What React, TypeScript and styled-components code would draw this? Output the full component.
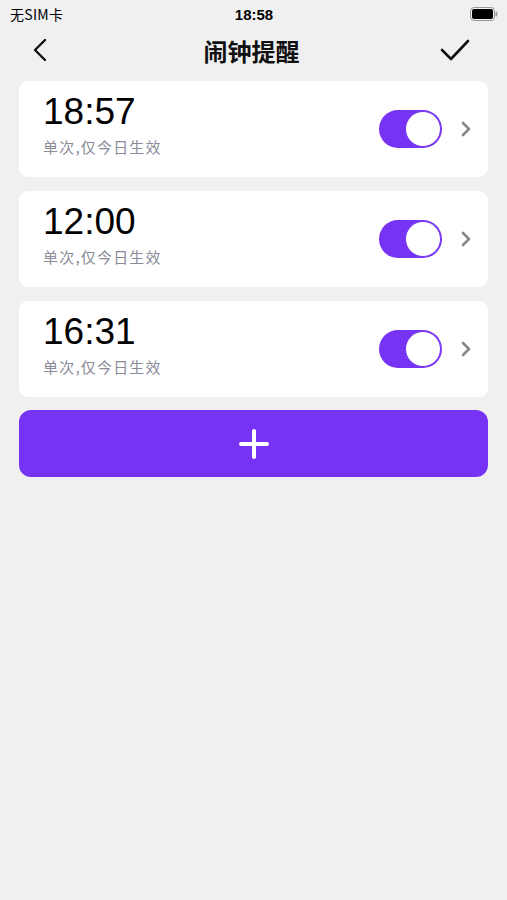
import React from "react";
import styled, { createGlobalStyle } from "styled-components";

const GlobalStyle = createGlobalStyle`
  html, body {
    margin: 0;
    padding: 0;
    background: #f0f0f0;
    font-family: "Liberation Sans", "Noto Sans CJK SC", sans-serif;
  }
`;

const Page = styled.div`
  width: 507px;
  min-height: 900px;
  background: #f0f0f0;
`;

const StatusBar = styled.div`
  height: 28px;
  display: grid;
  grid-template-columns: 1fr auto 1fr;
  align-items: center;
  padding: 0 9px 0 10px;
  color: #000;
`;

const Carrier = styled.span`
  font-size: 14px;
  font-family: "Noto Sans CJK SC", sans-serif;
  letter-spacing: 0.3px;
`;

const Clock = styled.span`
  font-weight: bold;
  font-size: 15px;
`;

const Battery = styled.div`
  justify-self: end;
  display: flex;
  align-items: center;
`;

const NavBar = styled.div`
  height: 48px;
  display: grid;
  grid-template-columns: 60px 1fr 60px;
  align-items: center;
  padding: 0 37px 0 33px;
  margin-top: -2px;
`;

const Title = styled.h1`
  margin: 0;
  text-align: center;
  font-size: 24px;
  font-weight: bold;
  font-family: "Noto Sans CJK SC", sans-serif;
  color: #111;
`;

const IconButton = styled.button<{ $end?: boolean }>`
  border: 0;
  background: none;
  padding: 0;
  display: flex;
  justify-content: ${(p) => (p.$end ? "flex-end" : "flex-start")};
  cursor: pointer;
`;

const List = styled.div`
  display: flex;
  flex-direction: column;
  gap: 14px;
  padding: 7px 19px 0 19px;
`;

const Card = styled.div`
  height: 96px;
  background: #fff;
  border-radius: 9px;
  display: flex;
  align-items: center;
  padding: 0 16px 0 24px;
`;

const Info = styled.div`
  flex: 1;
  display: flex;
  flex-direction: column;
  margin-top: -10px;
`;

const Time = styled.div`
  font-family: "Liberation Sans", sans-serif;
  font-size: 37px;
  line-height: 42px;
  color: #000;
`;

const Note = styled.div`
  font-family: "Noto Sans CJK SC", sans-serif;
  font-size: 15px;
  letter-spacing: 1.2px;
  color: #8b8b99;
  margin-top: 3px;
`;

const Toggle = styled.div<{ $on: boolean }>`
  width: 63px;
  height: 38px;
  border-radius: 19px;
  background: ${(p) => (p.$on ? "#7733f3" : "#ddd")};
  display: flex;
  align-items: center;
  justify-content: ${(p) => (p.$on ? "flex-end" : "flex-start")};
  padding: 1px;
  box-sizing: border-box;
  margin-right: 18px;
`;

const Knob = styled.div`
  width: 34px;
  height: 34px;
  border-radius: 50%;
  background: #fff;
  border: 1px solid #7733f3;
`;

const AddButton = styled.button`
  margin-top: -1px;
  height: 67px;
  border: 0;
  border-radius: 12px;
  background: #7733f3;
  display: flex;
  align-items: center;
  justify-content: center;
  cursor: pointer;
`;

const alarms = [
  { time: "18:57", note: "单次,仅今日生效", on: true },
  { time: "12:00", note: "单次,仅今日生效", on: true },
  { time: "16:31", note: "单次,仅今日生效", on: true },
];

export default function App() {
  return (
    <Page>
      <GlobalStyle />
      <StatusBar>
        <Carrier>无SIM卡</Carrier>
        <Clock>18:58</Clock>
        <Battery>
          <svg width="28" height="14" viewBox="0 0 28 14">
            <rect x="0.5" y="0.5" width="24" height="13" rx="3.5" fill="none" stroke="#999" />
            <rect x="2" y="2" width="21" height="10" rx="2" fill="#000" />
            <rect x="25.5" y="4.5" width="1.8" height="5" rx="0.9" fill="#999" />
          </svg>
        </Battery>
      </StatusBar>
      <NavBar>
        <IconButton>
          <svg width="14" height="24" viewBox="0 0 14 24">
            <path d="M12 2 L2 12 L12 22" fill="none" stroke="#111" strokeWidth="2.4" strokeLinecap="round" strokeLinejoin="round" />
          </svg>
        </IconButton>
        <Title>闹钟提醒</Title>
        <IconButton $end>
          <svg width="30" height="22" viewBox="0 0 30 22">
            <path d="M2 11 L11 20 L28 2" fill="none" stroke="#111" strokeWidth="2.6" strokeLinecap="round" strokeLinejoin="round" />
          </svg>
        </IconButton>
      </NavBar>
      <List>
        {alarms.map((a) => (
          <Card key={a.time}>
            <Info>
              <Time>{a.time}</Time>
              <Note>{a.note}</Note>
            </Info>
            <Toggle $on={a.on}>
              <Knob />
            </Toggle>
            <svg width="12" height="18" viewBox="0 0 12 18">
              <path d="M3 3 L9 9 L3 15" fill="none" stroke="#888" strokeWidth="2.6" strokeLinecap="round" strokeLinejoin="round" />
            </svg>
          </Card>
        ))}
        <AddButton>
          <svg width="32" height="32" viewBox="0 0 32 32">
            <path d="M16 3 V29 M3 16 H29" stroke="#fff" strokeWidth="4" strokeLinecap="round" />
          </svg>
        </AddButton>
      </List>
    </Page>
  );
}
